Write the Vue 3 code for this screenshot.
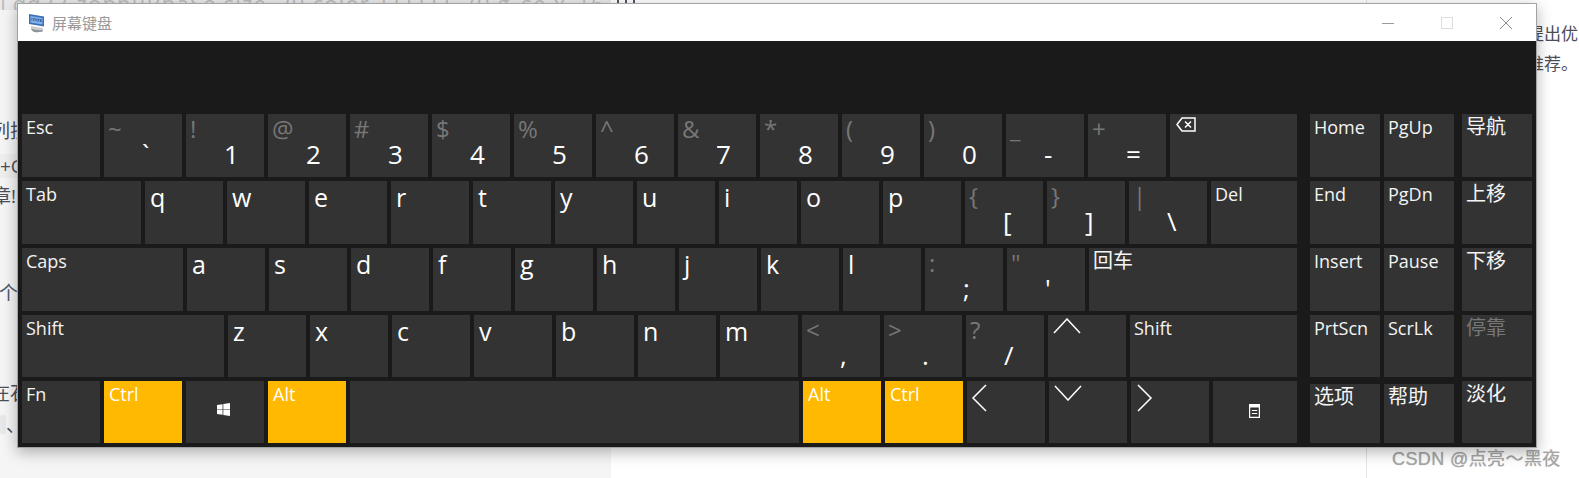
<template>
    <div class="page">
        <div class="bg-left"></div>
        <div class="bg-main"></div>
        <div class="bg-right"></div>

        <div class="strip">Lqd77 zobbuBbaSe size_20 color_FFFFFF 70 g_se x_16</div>
        <div class="strip-marks">
            <i></i>
            <i></i>
            <i></i>
        </div>
        <div
            v-for="bit in pageBits"
            :key="bit.text"
            class="page-bit"
            :class="bit.cls"
            :style="{ left: bit.x + 'px', top: bit.y + 'px' }"
        >
            {{ bit.text }}
        </div>
        <div class="tile"></div>
        <div class="watermark">CSDN @点亮～黑夜</div>

        <div class="window">
            <div class="titlebar">
                <svg class="app-icon" width="20" height="20" viewBox="0 0 20 20">
                    <path d="M2 1l15 2.500v10L2 11z" fill="#3f6fb5" />
                    <path d="M3.500 3l12 2v6.600l-12-2z" fill="#7fb2ea" />
                    <path d="M4.500 5l10 1.600V9l-10-1.600z" fill="#1d4f9c" />
                    <path d="M5 6l9 1.400M5 7l9 1.400" stroke="#d6e8fa" stroke-width="0.7" stroke-dasharray="1 .8" />
                    <path d="M4 13l12 2v3.500l-6 .8c-3 0-6-1.500-6-3z" fill="#c9ccd0" />
                    <path d="M4.500 15.500c3 1.500 7 2 11 1.500v1.500l-5.500 .8c-3 0-5.500-1.500-5.500-3.800z" fill="#8f9398" />
                </svg>
                <span class="title">屏幕键盘</span>
                <div class="controls">
                    <svg width="14" height="14" viewBox="0 0 14 14">
                        <path d="M1 7.500h12" stroke="#9a9a9a" fill="none" />
                    </svg>
                    <svg width="14" height="14" viewBox="0 0 14 14">
                        <rect x="1.500" y="1.500" width="11" height="11" stroke="#dcdcdc" fill="none" />
                    </svg>
                    <svg width="14" height="14" viewBox="0 0 14 14">
                        <path d="M1 1l12 12M13 1L1 13" stroke="#8a8a8a" fill="none" />
                    </svg>
                </div>
            </div>

            <div class="display"></div>

            <div class="board">
                <div class="keys">
                    <div v-for="(row, i) in rows" :key="i" class="row">
                        <div
                            v-for="k in row"
                            :key="k.id"
                            class="key"
                            :class="{ amber: k.amber, letter: k.letter, cjk: k.cjk }"
                            :style="{ width: k.w + 'px' }"
                        >
                            <template v-if="k.shift">
                                <div class="shift">{{ k.shift }}</div>
                                <div class="main">{{ k.main }}</div>
                            </template>
                            <svg v-else-if="k.icon" class="icon" :class="'icon-' + k.icon" :viewBox="icons[k.icon].box" :width="icons[k.icon].w" :height="icons[k.icon].h">
                                <path :d="icons[k.icon].d" :fill="icons[k.icon].fill ? '#fff' : 'none'" :fill-rule="icons[k.icon].fill ? 'evenodd' : 'nonzero'" :stroke="icons[k.icon].fill ? 'none' : '#fff'" stroke-width="1.500" />
                            </svg>
                            <template v-else>{{ k.label }}</template>
                        </div>
                    </div>
                </div>

                <div class="side">
                    <div
                        v-for="s in sideKeys"
                        :key="s.label"
                        class="key"
                        :class="{ cjk: s.cjk, dim: s.dim, low: s.low }"
                    >
                        {{ s.label }}
                    </div>
                </div>
            </div>
        </div>
    </div>
</template>

<script setup>
const pageBits = [
    { text: '列技', x: -9, y: 119, cls: '' },
    { text: '+C', x: -4, y: 154, cls: 'code' },
    { text: '章!', x: -8, y: 184, cls: '' },
    { text: '个', x: -1, y: 281, cls: 'link' },
    { text: '在石', x: -9, y: 381, cls: '' },
    { text: '、', x: 6, y: 413, cls: '' },
    { text: '提出优', x: 1527, y: 22, cls: 'right' },
    { text: '推荐。', x: 1527, y: 52, cls: 'right' },
]

const icons = {
    back: { box: '0 0 20 16', w: 20, h: 16, d: 'M6 1h13v13H6L1 7.500zM9 4.500l6 6M15 4.500l-6 6' },
    up: { box: '0 0 28 16', w: 28, h: 16, d: 'M1 15L14 1l13 14' },
    down: { box: '0 0 28 16', w: 28, h: 16, d: 'M1 1l13 14L27 1' },
    left: { box: '0 0 16 28', w: 16, h: 28, d: 'M15 1L2 14l13 13' },
    right: { box: '0 0 16 28', w: 16, h: 28, d: 'M1 1l13 13L1 27' },
    win: { box: '0 0 14 14', w: 13, h: 13, fill: true, d: 'M0 2.200l6-.9v5.300H0zM6.800 1.200L14 0v6.600H6.800zM0 7.400h6v5.300l-6-.9zM6.800 7.400H14V14l-7.200-1.200z' },
    menu: { box: '0 0 11 14', w: 11, h: 14, fill: true, d: 'M0 0h11v14H0zM1.200 3.500v9.300h8.600V3.500zM2.800 6h5.400v1.100H2.800zM2.800 9h5.400v1.100H2.800z' },
}

const k = (label, w = 78) => ({ id: label, label, w })
const num = (shift, main, w = 78) => ({ id: main, shift, main, w })
const letter = (label) => ({ id: label, label, w: 78, letter: true })
const icon = (name, w = 78) => ({ id: name, icon: name, w })
const amber = (id, label) => ({ id, label, w: 78, amber: true })

const rows = [
    [
        k('Esc'),
        num('~', '`'),
        num('!', '1'),
        num('@', '2'),
        num('#', '3'),
        num('$', '4'),
        num('%', '5'),
        num('^', '6'),
        num('&', '7'),
        num('*', '8'),
        num('(', '9'),
        num(')', '0'),
        num('_', '-'),
        num('+', '='),
        icon('back', 127),
    ],
    [
        k('Tab', 119),
        ...'qwertyuiop'.split('').map(letter),
        num('{', '['),
        num('}', ']'),
        num('|', '\\'),
        k('Del', 86),
    ],
    [
        k('Caps', 161),
        ...'asdfghjkl'.split('').map(letter),
        num(':', ';'),
        num('"', "'"),
        { id: 'enter', label: '回车', w: 208, cjk: true },
    ],
    [
        k('Shift', 202),
        ...'zxcvbnm'.split('').map(letter),
        num('<', ','),
        num('>', '.'),
        num('?', '/'),
        icon('up'),
        { id: 'rshift', label: 'Shift', w: 167 },
    ],
    [
        k('Fn'),
        amber('ctrl-l', 'Ctrl'),
        icon('win'),
        amber('alt-l', 'Alt'),
        { id: 'space', label: '', w: 449 },
        amber('alt-r', 'Alt'),
        amber('ctrl-r', 'Ctrl'),
        icon('left'),
        icon('down'),
        icon('right'),
        icon('menu', 84),
    ],
]

const sideKeys = [
    { label: 'Home' },
    { label: 'PgUp' },
    { label: '导航', cjk: true },
    { label: 'End' },
    { label: 'PgDn' },
    { label: '上移', cjk: true },
    { label: 'Insert' },
    { label: 'Pause' },
    { label: '下移', cjk: true },
    { label: 'PrtScn' },
    { label: 'ScrLk' },
    { label: '停靠', cjk: true, dim: true },
    { label: '选项', cjk: true, low: true },
    { label: '帮助', cjk: true, low: true },
    { label: '淡化', cjk: true },
]
</script>

<style scoped>
.page {
    position: relative;
    width: 1579px;
    height: 478px;
    display: flex;
    overflow: hidden;
    font-family: "Open Sans", "Noto Sans CJK SC", sans-serif;
}
.bg-left {
    width: 611px;
    background-color: #f5f5f5;
}
.bg-main {
    width: 755px;
    background-color: #fff;
    border-right: 1px solid #e4e4e4;
}
.bg-right {
    flex: 1;
    background-color: #fff;
}

.strip {
    position: absolute;
    left: 0;
    top: -14px;
    width: 611px;
    height: 20px;
    padding-top: 4px;
    line-height: 26px;
    font-size: 22px;
    letter-spacing: 1.2px;
    white-space: nowrap;
    overflow: hidden;
    color: #bdbdbd;
    background-color: #e9e9e9;
}
.strip-marks {
    position: absolute;
    left: 617px;
    top: 0;
    display: flex;
    gap: 6px;
}
.strip-marks i {
    width: 2px;
    height: 4px;
    background-color: #55556a;
}
.page-bit {
    position: absolute;
    font-size: 19px;
    line-height: 24px;
    white-space: nowrap;
    color: #4d4d5a;
}
.page-bit.code {
    background-color: #eeeeee;
    padding: 0 4px;
}
.page-bit.link {
    color: #4d5a70;
}
.page-bit.right {
    font-size: 17px;
}
.tile {
    position: absolute;
    left: 0;
    top: 415px;
    width: 6px;
    height: 19px;
    border-radius: 2px;
    background-color: #e6e8ea;
}
.watermark {
    position: absolute;
    left: 1392px;
    top: 447px;
    font-family: "Liberation Sans", "Noto Sans CJK SC", sans-serif;
    font-size: 18px;
    line-height: 24px;
    letter-spacing: 0.4px;
    white-space: nowrap;
    color: #a6a6a6;
    text-shadow: 0 0 1px #bbb;
}

.window {
    position: absolute;
    left: 17px;
    top: 3px;
    width: 1518px;
    border: 1px solid #a3a3a3;
    background-color: #1a1a1a;
    box-shadow: 0 4px 14px rgba(0, 0, 0, 0.3);
}
.titlebar {
    height: 37px;
    display: flex;
    align-items: center;
    padding-left: 9px;
    background-color: #fff;
}
.app-icon {
    margin-right: 5px;
}
.title {
    font-size: 15px;
    color: #999;
}
.controls {
    margin-left: auto;
    display: flex;
    gap: 45px;
    padding-right: 23px;
}
.display {
    height: 73px;
}

.board {
    display: flex;
    gap: 13px;
    padding: 0 4px 4px;
}
.keys {
    width: 1275px;
    display: flex;
    flex-direction: column;
    gap: 4px;
}
.row {
    display: flex;
    gap: 4px;
    height: 63px;
}
.row:nth-child(n + 4) {
    height: 62px;
}
.key {
    flex: none;
    box-sizing: border-box;
    padding-left: 4px;
    font-size: 18px;
    line-height: 26px;
    color: #f4f4f4;
    background-color: #333;
    overflow: hidden;
}
.key.amber {
    padding-left: 5px;
    background-color: #ffb900;
    color: #fff;
}
.key.letter {
    padding-left: 5px;
    font-size: 25px;
    line-height: 32px;
    color: #fff;
}
.key.cjk {
    font-size: 20px;
}
.shift {
    height: 24px;
    font-size: 24px;
    line-height: 30px;
    color: #777;
}
.main {
    margin-left: 34px;
    font-size: 26px;
    line-height: 32px;
    color: #fff;
}

.icon {
    display: block;
}
.icon-back {
    margin: 3px 0 0 2px;
}
.icon-up {
    margin: 3px 0 0 1px;
}
.icon-down {
    margin: 4px 0 0 1px;
}
.icon-left {
    margin: 3px 0 0 0;
}
.icon-right {
    margin: 3px 0 0 2px;
}
.icon-win {
    margin: 22px 0 0 27px;
}
.icon-menu {
    margin: 23px 0 0 32px;
}

.side {
    width: 222px;
    display: grid;
    grid-template-columns: 70px 70px 74px;
    grid-template-rows: 63px 63px 63px 62px 62px;
    column-gap: 4px;
    row-gap: 4px;
}
.side .key:nth-child(3n) {
    margin-left: 4px;
}
.side .key.dim {
    color: #777;
}
.side .key.low {
    margin-top: 3px;
}
</style>
